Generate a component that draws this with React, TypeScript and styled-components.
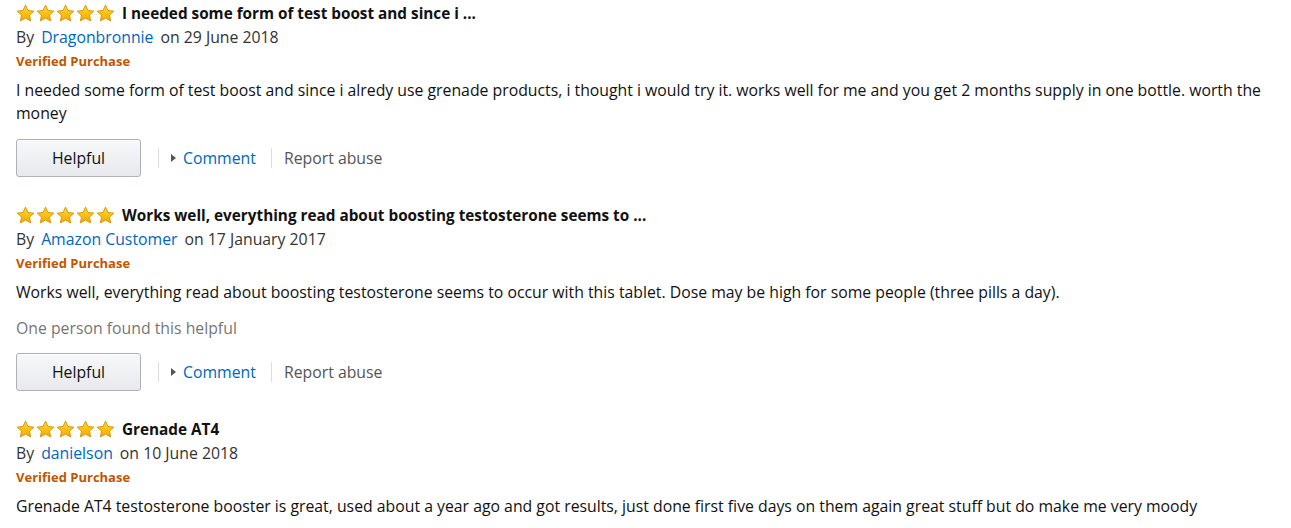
import { FC } from "react";
import styled, { createGlobalStyle } from "styled-components";

const GlobalStyle = createGlobalStyle`
	body {
		margin: 0;
		background: #fff;
		font-family: "Open Sans", "Noto Sans", sans-serif;
		color: #111;
	}
`;

const Page = styled.div`
	padding: 1px 16px 0;
	display: flex;
	flex-direction: column;
	gap: 26px;
`;

const Review = styled.div`
	display: flex;
	flex-direction: column;
`;

const Header = styled.div`
	display: flex;
	align-items: center;
	gap: 7px;
	height: 24px;
`;

const Stars = styled.div`
	display: flex;
	gap: 1px;
`;

const Title = styled.span`
	font-weight: 700;
	font-size: 15.3px;
	color: #111;
`;

const Byline = styled.div`
	font-size: 15.8px;
	line-height: 24px;
	color: #333;

	& a {
		color: #0066c0;
		text-decoration: none;
		margin: 0 7px;
	}
`;

const Verified = styled.div`
	font-size: 13px;
	font-weight: 700;
	line-height: 24px;
	color: #c45500;
`;

const Body = styled.p`
	margin: 6px 0 0;
	font-size: 15.8px;
	line-height: 23px;
	color: #111;
`;

const Votes = styled.div`
	margin-top: 13px;
	font-size: 15.8px;
	line-height: 23px;
	color: #767676;
`;

const Actions = styled.div<{ $top: number }>`
	display: flex;
	align-items: center;
	margin-top: ${(p) => p.$top}px;
`;

const HelpfulButton = styled.button`
	width: 125px;
	height: 38px;
	border: 1px solid #adb1b8;
	border-radius: 3px;
	background: linear-gradient(to bottom, #f7f8fa, #e7e9ec);
	box-shadow: 0 1px 0 rgba(255, 255, 255, 0.6) inset;
	font-family: inherit;
	font-size: 15.8px;
	color: #111;
	cursor: pointer;
`;

const Divider = styled.span<{ $left: number }>`
	width: 1px;
	height: 20px;
	background: #ddd;
	margin: 0 12px 0 ${(p) => p.$left}px;
`;

const Link = styled.a<{ $muted?: boolean }>`
	font-size: 15.8px;
	color: ${(p) => (p.$muted ? "#555" : "#0066c0")};
	text-decoration: none;
	display: flex;
	align-items: center;
	gap: 7px;
`;

const Caret = styled.span`
	width: 0;
	height: 0;
	border-top: 4px solid transparent;
	border-bottom: 4px solid transparent;
	border-left: 5px solid #555;
`;

const Star: FC = () => (
	<svg width="19" height="19" viewBox="0 0 20 20">
		<defs>
			<linearGradient id="starFill" x1="0" y1="0" x2="0" y2="1">
				<stop offset="0" stopColor="#ffd83a" />
				<stop offset="1" stopColor="#f5a800" />
			</linearGradient>
		</defs>
		<path
			d="M10 1.2l2.6 5.6 6.1.7-4.5 4.2 1.2 6.1L10 14.8l-5.4 3 1.2-6.1L1.3 7.5l6.1-.7z"
			fill="url(#starFill)"
			stroke="#d99500"
			strokeWidth="1"
			strokeLinejoin="round"
		/>
	</svg>
);

type ReviewData = {
	title: string;
	author: string;
	date: string;
	body: string;
	votes?: string;
};

const reviews: ReviewData[] = [
	{
		title: "I needed some form of test boost and since i ...",
		author: "Dragonbronnie",
		date: "29 June 2018",
		body: "I needed some form of test boost and since i alredy use grenade products, i thought i would try it. works well for me and you get 2 months supply in one bottle. worth the money",
	},
	{
		title: "Works well, everything read about boosting testosterone seems to ...",
		author: "Amazon Customer",
		date: "17 January 2017",
		body: "Works well, everything read about boosting testosterone seems to occur with this tablet. Dose may be high for some people (three pills a day).",
		votes: "One person found this helpful",
	},
	{
		title: "Grenade AT4",
		author: "danielson",
		date: "10 June 2018",
		body: "Grenade AT4 testosterone booster is great, used about a year ago and got results, just done first five days on them again great stuff but do make me very moody",
	},
];

const ReviewItem: FC<{ review: ReviewData; last: boolean }> = ({ review, last }) => (
	<Review>
		<Header>
			<Stars>
				{[0, 1, 2, 3, 4].map((i) => (
					<Star key={i} />
				))}
			</Stars>
			<Title>{review.title}</Title>
		</Header>
		<Byline>
			By<a href="#">{review.author}</a>on {review.date}
		</Byline>
		<Verified>Verified Purchase</Verified>
		<Body>{review.body}</Body>
		{review.votes && <Votes>{review.votes}</Votes>}
		{!last && (
			<Actions $top={review.votes ? 13 : 14}>
				<HelpfulButton>Helpful</HelpfulButton>
				<Divider $left={17} />
				<Link href="#">
					<Caret />
					Comment
				</Link>
				<Divider $left={15} />
				<Link href="#" $muted>
					Report abuse
				</Link>
			</Actions>
		)}
	</Review>
);

export default function App() {
	return (
		<>
			<GlobalStyle />
			<Page>
				{reviews.map((r, i) => (
					<ReviewItem key={r.author} review={r} last={i === reviews.length - 1} />
				))}
			</Page>
		</>
	);
}
